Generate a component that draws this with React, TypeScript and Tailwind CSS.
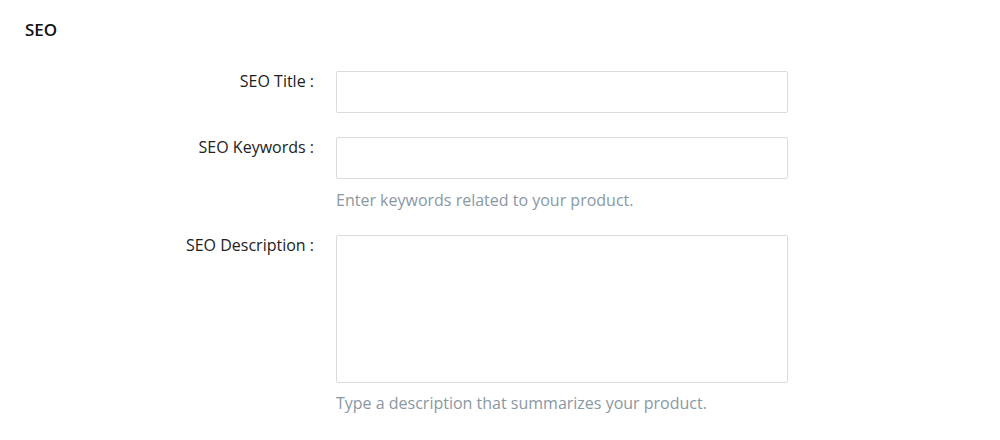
import React from "react";

export default function App() {
  return (
    <div className="w-[1000px] h-[440px] bg-white pt-[20px] pl-[25px] text-[#222]" style={{ fontFamily: '"Open Sans", "Lato", sans-serif' }}>
      <h2 className="text-[17px] leading-[20px] font-semibold text-[#111]">SEO</h2>
      <div className="mt-[31px] flex flex-col">
        <div className="flex">
          <label className="w-[311px] pr-[22px] text-right text-[16px] leading-[20px] text-[#222]">SEO Title :</label>
          <input className="w-[452px] h-[42px] border border-[#dcdcdc] rounded-[2px] outline-none" />
        </div>
        <div className="flex mt-[24px]">
          <label className="w-[311px] pr-[22px] text-right text-[16px] leading-[20px] text-[#222]">SEO Keywords :</label>
          <div className="flex flex-col">
            <input className="w-[452px] h-[42px] border border-[#dcdcdc] rounded-[2px] outline-none" />
            <p className="mt-[11px] text-[16px] leading-[20px] text-[#8a98a3]">Enter keywords related to your product.</p>
          </div>
        </div>
        <div className="flex mt-[25px]">
          <label className="w-[311px] pr-[22px] text-right text-[16px] leading-[20px] text-[#222]">SEO Description :</label>
          <div className="flex flex-col">
            <textarea className="w-[452px] h-[148px] border border-[#dcdcdc] rounded-[2px] outline-none resize-none" />
            <p className="mt-[10px] text-[16px] leading-[20px] text-[#8a98a3]">Type a description that summarizes your product.</p>
          </div>
        </div>
      </div>
    </div>
  );
}
